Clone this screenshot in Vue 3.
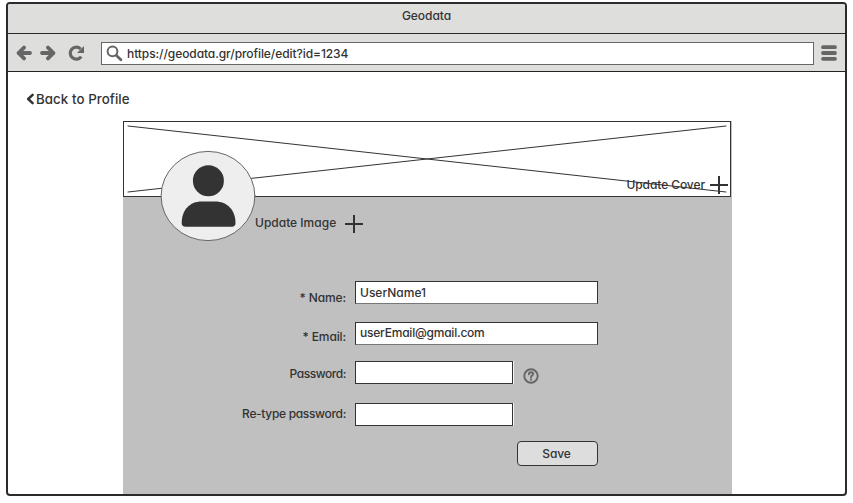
<script setup>
import { ref } from 'vue'

const fields = ref([
  { id: 'name', label: '* Name:', value: 'UserName1', type: 'text' },
  { id: 'email', label: '* Email:', value: 'userEmail@gmail.com', type: 'text' },
  { id: 'password', label: 'Password:', value: '', type: 'password', help: true },
  { id: 'retype', label: 'Re-type password:', value: '', type: 'password' },
])
</script>

<template>
  <div class="window">
    <header class="titlebar"><span class="title">Geodata</span></header>
    <nav class="toolbar">
      <svg class="arrow" width="16" height="16" viewBox="0 0 16 16">
        <path d="M2.500 8H14M8 2.600L2.600 8l5.400 5.400" />
      </svg>
      <svg class="arrow forward" width="16" height="16" viewBox="0 0 16 16">
        <path d="M2 8h11.500M8 2.600L13.400 8l-5.400 5.400" />
      </svg>
      <svg class="reload" width="17" height="16" viewBox="0 0 17 16">
        <path class="arc" d="M12.600 4A6 6 0 1 0 13.200 11.600" />
        <path class="tip" d="M16 1v7H9z" />
      </svg>
      <div class="address">
        <svg class="search" width="17" height="17" viewBox="0 0 17 17">
          <circle cx="6.500" cy="6.300" r="4.900" />
          <path d="M10.400 10.400l4.500 4.400" />
        </svg>
        <span class="url">https://geodata.gr/profile/edit?id=1234</span>
      </div>
      <svg class="menu" width="16" height="16" viewBox="0 0 16 16">
        <path d="M2 2.200h12M2 8h12M2 13.800h12" />
      </svg>
    </nav>

    <main class="page">
      <a class="back">
        <svg width="8" height="12" viewBox="0 0 8 12"><path d="M6.600 1.900L2.200 6l4.400 4.100" /></svg>
        <span>Back to Profile</span>
      </a>
      <section class="profile">
        <div class="cover">
          <svg class="cross" width="607" height="75" viewBox="0 0 607 75">
            <path d="M4 4L602 70M4 70L602 4" />
          </svg>
          <a class="update-cover">
            <span>Update Cover</span>
            <svg class="plus" width="18" height="18" viewBox="0 0 18 18"><path d="M9 .5v17M.5 9h17" /></svg>
          </a>
        </div>
        <svg class="avatar" width="96" height="92" viewBox="0 0 96 92">
          <ellipse class="disc" cx="48" cy="46" rx="46.900" ry="44.600" />
          <circle class="person" cx="48.400" cy="30.700" r="15.500" />
          <path class="person" d="M21.700 73c0-13 8-21.500 20-21.500h13.500c12 0 20.300 8.500 20.300 21.500 0 2.600-1.400 3.800-3.700 3.800H25.500c-2.400 0-3.800-1.200-3.800-3.800z" />
        </svg>
        <a class="update-image">
          <span>Update Image</span>
          <svg class="plus" width="18" height="18" viewBox="0 0 18 18"><path d="M9 .5v17M.5 9h17" /></svg>
        </a>
        <form class="form" @submit.prevent>
          <div v-for="f in fields" :key="f.id" class="row" :class="f.id">
            <label :for="f.id"><span>{{ f.label }}</span></label>
            <input :id="f.id" v-model="f.value" :type="f.type" autocomplete="off" />
            <svg v-if="f.help" class="help" width="16" height="16" viewBox="0 0 16 16">
              <circle cx="8" cy="8" r="6.700" />
              <path d="M5.900 6.300C6 4.900 6.900 4.300 8 4.300s2.100.700 2.100 1.800C10.100 7.500 8 7.600 8 9.200" />
              <path d="M8 11.300v.400" />
            </svg>
          </div>
          <button class="save" type="submit"><span>Save</span></button>
        </form>
      </section>
    </main>
  </div>
</template>

<style>
body {
  background: #fff;
  overflow: hidden;
}
</style>

<style scoped>
* {
  box-sizing: border-box;
}
svg {
  display: block;
  flex: none;
  fill: none;
  stroke-linecap: round;
  stroke-linejoin: round;
}
.window {
  display: flex;
  flex-direction: column;
  width: 841px;
  height: 494px;
  margin: 2px 0 0 6px;
  border: 2px solid #2b2a2d;
  border-radius: 4px;
  background: #fff;
  color: #333;
  font: 500 12px/16px Inter, "Noto Sans", sans-serif;
  font-feature-settings: "cv11" 1;
  overflow: hidden;
}
.titlebar {
  height: 30px;
  padding-top: 4px;
  border-bottom: 1px solid #2b2a2d;
  background: #dededd;
  text-align: center;
}
.title {
  letter-spacing: -0.05px;
}
.toolbar {
  display: flex;
  align-items: center;
  height: 38px;
  padding: 0 8px;
  border-bottom: 1px solid #222;
  background: #dededd;
}
.arrow {
  stroke: #666;
  stroke-width: 3.8;
}
.forward {
  margin-left: 8px;
}
.reload {
  margin-left: 12px;
}
.reload .arc {
  stroke: #666;
  stroke-width: 3.2;
  stroke-linecap: butt;
}
.reload .tip {
  fill: #666;
}
.address {
  display: flex;
  align-items: center;
  flex: none;
  width: 713px;
  height: 23px;
  margin: 1px 0 0 16px;
  padding-left: 4px;
  border: 1px solid #666;
  background: #fff;
}
.search {
  stroke: #666;
  stroke-width: 2;
}
.search path {
  stroke-width: 2.8;
}
.url {
  margin: 2px 0 0 4px;
  letter-spacing: -0.08px;
}
.menu {
  margin-left: 7px;
  stroke: #666;
  stroke-width: 3.8;
}
.page {
  display: flex;
  flex-direction: column;
  flex: 1;
}
.back {
  display: flex;
  align-items: center;
  height: 16px;
  margin: 19px 0 14px 18px;
  font-size: 13.3px;
  letter-spacing: 0.07px;
}
.back svg {
  margin-right: 2px;
  stroke: #333;
  stroke-width: 2.5;
}
.profile {
  position: relative;
  flex: 1;
  width: 609px;
  margin-left: 115px;
  background: #c0c0c0;
}
.cover {
  position: relative;
  width: 608px;
  height: 76px;
  border: 1px solid #333;
  background: #fff;
}
.cross {
  stroke: #333;
  stroke-width: 1;
}
.update-cover {
  position: absolute;
  right: 2px;
  bottom: 2px;
  display: flex;
  align-items: center;
  gap: 5px;
  letter-spacing: -0.08px;
}
.plus {
  stroke: #333;
  stroke-width: 2;
}
.avatar {
  position: absolute;
  left: 37px;
  top: 29px;
}
.disc {
  fill: #eee;
  stroke: #666;
}
.person {
  fill: #333;
}
.update-image {
  display: flex;
  align-items: center;
  gap: 9px;
  height: 18px;
  margin: 18px 0 0 132px;
}
.update-image span {
  margin-top: -2px;
}
.form {
  margin-top: 48px;
}
.row {
  display: flex;
  height: 23px;
}
.row label {
  width: 223px;
  margin-right: 9px;
  letter-spacing: -0.12px;
  text-align: right;
}
.row input {
  width: 158px;
  height: 23px;
  padding: 0 4px 1px;
  border: 1px solid #333;
  border-radius: 0;
  outline: 0;
  background: #fff;
  color: #333;
  font: inherit;
  font-feature-settings: inherit;
}
.row.name input,
.row.email input {
  width: 243px;
  border-bottom-color: #777;
}
.row.email input {
  padding-bottom: 3px;
  letter-spacing: -0.22px;
}
.name label {
  padding-top: 9px;
}
.email {
  margin-top: 18px;
}
.email label {
  padding-top: 7px;
}
.password {
  margin-top: 16px;
}
.row.password label {
  padding-top: 5px;
  letter-spacing: -0.45px;
}
.password input,
.retype input {
  box-shadow: 1px 0 0 #f4f4f4;
}
.retype {
  margin-top: 19px;
}
.row.retype label {
  padding-top: 3px;
  letter-spacing: -0.32px;
}
.help {
  margin: 7px 0 0 9.500px;
  stroke: #666;
  stroke-width: 1.9;
}
.save {
  display: block;
  width: 81px;
  height: 25px;
  margin: 15px 0 0 394px;
  padding: 0 2px 0 0;
  border: 1px solid #333;
  border-radius: 4px;
  background: #ddd;
  color: #333;
  font: inherit;
  font-feature-settings: inherit;
  letter-spacing: -0.1px;
}
</style>
